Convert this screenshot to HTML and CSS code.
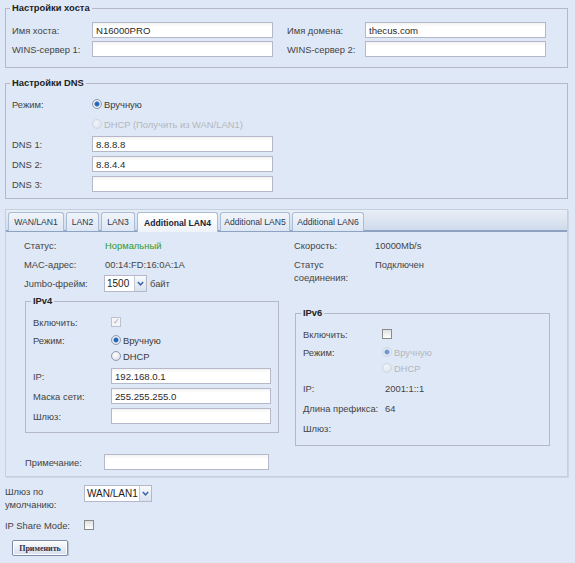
FILE: index.html
```html
<!DOCTYPE html>
<html lang="ru">
<head>
    <meta charset="UTF-8">
    <title>Сеть</title>
    <link rel="stylesheet" href="styles.css">
</head>
<body>
<div class="page">

    <fieldset class="box host">
        <legend>Настройки хоста</legend>
        <div class="hostGrid">
            <label>Имя хоста:</label><input class="txt" value="N16000PRO">
            <label>Имя домена:</label><input class="txt" value="thecus.com">
            <label>WINS-сервер 1:</label><input class="txt" value="">
            <label>WINS-сервер 2:</label><input class="txt" value="">
        </div>
    </fieldset>

    <fieldset class="box dns">
        <legend>Настройки DNS</legend>
        <div class="dnsGrid">
            <label>Режим:</label>
            <div class="opt"><span class="rd on"></span>Вручную</div>
            <label></label>
            <div class="opt off"><span class="rd"></span>DHCP (Получить из WAN/LAN1)</div>
            <label>DNS 1:</label><input class="txt" value="8.8.8.8">
            <label>DNS 2:</label><input class="txt" value="8.8.4.4">
            <label>DNS 3:</label><input class="txt" value="">
        </div>
    </fieldset>

    <div class="tabPanel">
        <div class="strip">
            <span class="tab">WAN/LAN1</span>
            <span class="tab">LAN2</span>
            <span class="tab">LAN3</span>
            <span class="tab active">Additional LAN4</span>
            <span class="tab">Additional LAN5</span>
            <span class="tab">Additional LAN6</span>
        </div>
        <div class="tabBody">
            <div class="info">
                <span>Статус:</span>
                <span class="ok">Нормальный</span>
                <span>Скорость:</span>
                <span>10000Mb/s</span>

                <span>MAC-адрес:</span>
                <span>00:14:FD:16:0A:1A</span>
                <span class="twoLine">Статус<br>соединения:</span>
                <span>Подключен</span>

                <span>Jumbo-фрейм:</span>
                <span class="jumbo">
                    <span class="sel small"><span class="selTxt">1500</span><span class="arr"><svg width="7" height="5" viewBox="0 0 7 5"><path d="M0.8 1 L3.5 3.8 L6.2 1" fill="none" stroke="#3d64a6" stroke-width="1.5"/></svg></span></span>
                    байт
                </span>
            </div>

            <div class="ipRow">
                <fieldset class="box ip v4">
                    <legend>IPv4</legend>
                    <div class="ipGrid">
                        <label class="r18">Включить:</label>
                        <div class="r18"><span class="cb on dis">&#10003;</span></div>
                        <label class="r16 first">Режим:</label>
                        <div class="opt r16 first"><span class="rd on"></span>Вручную</div>
                        <label class="r16"></label>
                        <div class="opt r16"><span class="rd"></span>DHCP</div>
                        <label class="r20 gapTop">IP:</label><input class="txt ipTxt gapTop" value="192.168.0.1">
                        <label class="r20">Маска сети:</label><input class="txt ipTxt" value="255.255.255.0">
                        <label class="r20">Шлюз:</label><input class="txt ipTxt" value="">
                    </div>
                </fieldset>

                <fieldset class="box ip v6">
                    <legend>IPv6</legend>
                    <div class="ipGrid">
                        <label class="r18">Включить:</label>
                        <div class="r18"><span class="cb"></span></div>
                        <label class="r16 first">Режим:</label>
                        <div class="opt off r16 first"><span class="rd on"></span>Вручную</div>
                        <label class="r16"></label>
                        <div class="opt off r16"><span class="rd"></span>DHCP</div>
                        <label class="r20 gapTop">IP:</label><span class="val r20 gapTop">2001:1::1</span>
                        <label class="r20">Длина префикса:</label><span class="val r20">64</span>
                        <label class="r20">Шлюз:</label><span class="val r20"></span>
                    </div>
                </fieldset>
            </div>

            <div class="note">
                <label>Примечание:</label>
                <input class="txt noteTxt" value="">
            </div>
        </div>
    </div>

    <div class="bottomRow gw">
        <label>Шлюз по<br>умолчанию:</label>
        <span class="sel wide"><span class="selTxt">WAN/LAN1</span><span class="arr"><svg width="7" height="5" viewBox="0 0 7 5"><path d="M0.8 1 L3.5 3.8 L6.2 1" fill="none" stroke="#3d64a6" stroke-width="1.5"/></svg></span></span>
    </div>
    <div class="bottomRow share">
        <label>IP Share Mode:</label>
        <span class="cb"></span>
    </div>
    <button class="btnApply">Применить</button>

</div>
</body>
</html>
```

FILE: styles.css
```css
*{margin: 0; padding: 0; box-sizing: border-box;}

body{
    background: #dfe8f6;
    font-family: "Liberation Sans", Arial, sans-serif;
    font-size: 9.4px;
    color: #454545;
}
.page{
    width: 575px;
    padding: 2px 7px 0 5px;
}
label{
    display: flex;
    align-items: center;
    white-space: nowrap;
}

/* fieldsets */
.box{
    border: 1px solid #b5b8c8;
    padding: 8px 6px 10px 6px;
    min-width: 0;
}
.box legend{
    font-weight: bold;
    color: #222;
    line-height: 12px;
    padding: 0 2px;
    margin-left: -2px;
}
.txt{
    display: block;
    width: 181px;
    height: 16px;
    border: 1px solid #b5b8c8;
    background: #fff linear-gradient(#f3f3f3, #fff 4px);
    font-family: inherit;
    font-size: 9.6px;
    color: #2a2a2a;
    padding: 0 3px;
    outline: none;
}

.hostGrid{
    display: grid;
    grid-template-columns: 80px 195px 78px 181px;
    grid-auto-rows: 16px;
    row-gap: 3px;
}

.dns{
    margin-top: 9px;
    padding-top: 5px;
    padding-bottom: 4px;
}
.dnsGrid{
    display: grid;
    grid-template-columns: 80px 181px;
    grid-auto-rows: 20px;
    align-items: center;
}
.dnsGrid label{height: 100%;}

/* radio + checkbox */
.opt{
    display: flex;
    align-items: center;
    color: #3a3a3a;
}
.opt.off{color: #b3b7bd;}
.rd{
    display: inline-block;
    width: 10px;
    height: 10px;
    border-radius: 50%;
    border: 1px solid #8f9aab;
    background: radial-gradient(circle at 40% 35%, #fff, #d3d9e2);
    margin-right: 2px;
}
.rd.on{
    background: radial-gradient(circle at 50% 50%, #1f5db3 0, #2d6cc0 2px, #eef2f7 3px, #cdd4de 100%);
}
.opt.off .rd{
    border-color: #c5cbd3;
    opacity: .6;
}
.cb{
    display: inline-flex;
    justify-content: center;
    align-items: center;
    width: 10px;
    height: 10px;
    border: 1px solid #8b8b8b;
    background: linear-gradient(#e0e0e0, #fff);
    font-size: 8px;
    line-height: 1;
}
.cb.dis{
    border-color: #bcc2cb;
    color: #9aa6b8;
    background: #f2f4f7;
}

/* tabs */
.tabPanel{
    margin-top: 10px;
    border: 1px solid #c4cfe0;
    border-top: none;
    box-shadow: 1px 1px 0 #cdd6e4;
}
.strip{
    display: flex;
    gap: 2px;
    padding: 2px 0 0 2px;
    height: 23px;
    border-top: 1px solid #c4cfe0;
    border-bottom: 2px solid #8ea3c2;
    background: linear-gradient(#e9eef6, #cfdbec);
}
.tab{
    display: flex;
    align-items: center;
    justify-content: center;
    height: 19px;
    border: 1px solid #a9bcd8;
    border-bottom: none;
    border-radius: 3px 3px 0 0;
    background: linear-gradient(#f1f5fb, #dde6f3);
    color: #2b3a52;
    font-size: 8.6px;
    white-space: nowrap;
}
.tab:nth-child(1){width: 56px;}
.tab:nth-child(2){width: 33px;}
.tab:nth-child(3){width: 34px;}
.tab:nth-child(4){width: 81px;}
.tab:nth-child(5){width: 70px;}
.tab:nth-child(6){width: 72px;}
.tab.active{
    background: linear-gradient(#ffffff, #eef3fa);
    font-weight: bold;
    color: #1b2333;
    height: 20px;
}
.tabBody{
    padding: 4px 0 6px 18px;
}
.info{
    display: grid;
    grid-template-columns: 81px 189px 81px auto;
    grid-template-rows: 19px 19px 19px;
    align-items: center;
}
.info .ok{color: #2f9a2f;}
.info .twoLine{
    grid-row: span 2;
    align-self: start;
    line-height: 13px;
    padding-top: 3px;
}
.jumbo{
    display: flex;
    align-items: center;
    gap: 3px;
    margin-left: -1px;
}
.sel{
    display: inline-flex;
    height: 17px;
    border: 1px solid #b5b8c8;
    background: #fff;
}
.sel .selTxt{
    display: flex;
    align-items: center;
    padding-left: 2px;
    font-size: 10px;
    color: #222;
    white-space: nowrap;
    overflow: hidden;
}
.sel.small .selTxt{width: 29px;}
.sel.wide .selTxt{width: 54px;}
.sel .arr{
    width: 12px;
    display: flex;
    justify-content: center;
    align-items: center;
    border-left: 1px solid #c3cad6;
    background: linear-gradient(#f7f9fc, #d9e2ef);
}

.ipRow{
    display: flex;
    align-items: flex-start;
    gap: 16px;
    margin-top: 2px;
    margin-left: 1px;
}
.ip{
    padding: 6px 7px 6px 7px;
}
.v4{width: 254px;}
.v6{width: 255px; margin-top: 12px;}
.ipGrid{
    display: grid;
    grid-template-columns: 78px 160px;
}
.ipGrid > *{
    display: flex;
    align-items: center;
}
.ipGrid .r18{height: 18px;}
.ipGrid .r16{height: 16px;}
.ipGrid .first{margin-top: 1px;}
.ipGrid .r20{height: 20px;}
.ipGrid .gapTop{margin-top: 2px;}
.ipGrid .ipTxt{width: 160px; height: 16px; align-self: center; display: block;}
.ipGrid .val{padding-left: 3px;}
.v6 .ipGrid{grid-template-columns: 79px 160px;}
.v6{padding-bottom: 7px;}

.note{
    display: flex;
    margin-top: 8px;
    margin-left: 1px;
}
.note label{width: 79px;}
.noteTxt{width: 165px;}

/* under the panel */
.bottomRow{
    display: flex;
    align-items: flex-start;
}
.bottomRow label{
    width: 79px;
    line-height: 13px;
}
.gw{margin-top: 8px;}
.share{
    margin-top: 5px;
    height: 18px;
    align-items: center;
}
.share label{height: 18px;}
.btnApply{
    display: block;
    margin: 6px 0 0 7px;
    width: 56px;
    height: 16px;
    border: 1px solid #7b8daa;
    border-radius: 2px;
    background: linear-gradient(#fbfcfe, #d6dfec);
    box-shadow: inset 0 0 0 1px #fff, 1px 1px 0 #b8c3d4;
    font-family: "Liberation Serif", serif;
    font-size: 8px;
    font-weight: bold;
    color: #2a3550;
}
```
